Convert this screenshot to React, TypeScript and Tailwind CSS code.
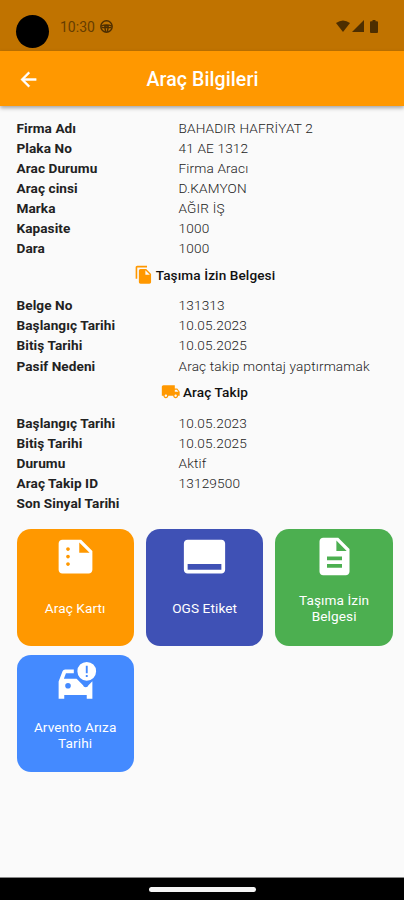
import React from "react";

type Pair = [string, string];

const vehicle: Pair[] = [
  ["Firma Adı", "BAHADIR HAFRİYAT 2"],
  ["Plaka No", "41 AE 1312"],
  ["Arac Durumu", "Firma Aracı"],
  ["Araç cinsi", "D.KAMYON"],
  ["Marka", "AĞIR İŞ"],
  ["Kapasite", "1000"],
  ["Dara", "1000"],
];
const permit: Pair[] = [
  ["Belge No", "131313"],
  ["Başlangıç Tarihi", "10.05.2023"],
  ["Bitiş Tarihi", "10.05.2025"],
  ["Pasif Nedeni", "Araç takip montaj yaptırmamak"],
];
const tracking: Pair[] = [
  ["Başlangıç Tarihi", "10.05.2023"],
  ["Bitiş Tarihi", "10.05.2025"],
  ["Durumu", "Aktif"],
  ["Araç Takip ID", "13129500"],
  ["Son Sinyal Tarihi", ""],
];

const icons = {
  copy: "M16 1H4c-1.1 0-2 .9-2 2v14h2V3h12V1zm-1 4l6 6v10c0 1.1-.9 2-2 2H7.99C6.89 23 6 22.1 6 21l.01-14c0-1.1.89-2 1.99-2h7zm-1 7h5.5L14 6.5V12z",
  truck: "M20 8h-3V4H3c-1.1 0-2 .9-2 2v11h2c0 1.66 1.34 3 3 3s3-1.34 3-3h6c0 1.66 1.34 3 3 3s3-1.34 3-3h2v-5l-3-4zM6 18.5c-.83 0-1.5-.67-1.5-1.5s.67-1.5 1.5-1.5 1.5.67 1.5 1.5-.67 1.5-1.5 1.5zm13.5-9l1.96 2.5H17V9.5h2.5zm-1.5 9c-.83 0-1.5-.67-1.5-1.5s.67-1.5 1.5-1.5 1.5.67 1.5 1.5-.67 1.5-1.5 1.5z",
  summary: "M15 3H5c-1.1 0-1.99.9-1.99 2L3 19c0 1.1.89 2 1.99 2H19c1.1 0 2-.9 2-2V9l-6-6zM8 17c-.55 0-1-.45-1-1s.45-1 1-1 1 .45 1 1-.45 1-1 1zm0-4c-.55 0-1-.45-1-1s.45-1 1-1 1 .45 1 1-.45 1-1 1zm0-4c-.55 0-1-.45-1-1s.45-1 1-1 1 .45 1 1-.45 1-1 1zm6 1V4.5l5.5 5.5H14z",
  label: "M21 3H3c-1.1 0-2 .9-2 2v14c0 1.1.9 2 2 2h18c1.1 0 2-.9 2-2V5c0-1.1-.9-2-2-2zm0 16H3v-3h18v3z",
  document: "M14 2H6c-1.1 0-1.99.9-1.99 2L4 20c0 1.1.89 2 1.99 2H18c1.1 0 2-.9 2-2V8l-6-6zm2 16H8v-2h8v2zm0-4H8v-2h8v2zm-3-5V3.5L18.5 9H13z",
  back: "M20 11H7.83l5.59-5.59L12 4l-8 8 8 8 1.41-1.41L7.83 13H20v-2z",
  crash: "M18 1a5 5 0 1 0 0 10a5 5 0 0 0 0-10zM17.5 3h1v4h-1zM17.5 8h1v1h-1zM11.1 5H6.5c-.66 0-1.21.42-1.42 1.01L3 11.5V20.6h3V18.6h12v2h3V11.3L18.9 13.4A1.5 1.5 0 0 1 16 13.4L12.6 10H5.8L6.9 7H11.1zM8 12.2a1.5 1.5 0 1 0 0 3a1.5 1.5 0 0 0 0-3z",
};

function Icon({ d, className }: { d: string; className: string }) {
  return (
    <svg viewBox="0 0 24 24" fill="currentColor" fillRule="evenodd" className={className}>
      <path d={d} />
    </svg>
  );
}

function Rows({ items }: { items: Pair[] }) {
  return (
    <dl>
      {items.map(([k, v]) => (
        <div key={k} className="flex h-[20.1px] items-center text-[13.6px] leading-[20px]">
          <dt className="w-[162px] font-bold tracking-[0.07px] text-[#222]">{k}</dt>
          <dd className="whitespace-nowrap font-light tracking-[0.17px] text-[#222]">{v}</dd>
        </div>
      ))}
    </dl>
  );
}

function Heading({ icon, children }: { icon: string; children: string }) {
  return (
    <h2 className="flex h-[37px] items-center justify-center gap-[2.5px] pb-[4px] pl-[5px] text-[13.6px] font-medium tracking-[0.1px] text-[#111]">
      <Icon d={icon} className="size-[19.5px] text-[#ff9800]" />
      {children}
    </h2>
  );
}

function Tile({ icon, label, color }: { icon: string; label: string; color: string }) {
  return (
    <button className={`flex h-[117.3px] flex-col items-center rounded-[14px] px-3 pt-[5px] text-white ${color}`}>
      <Icon d={icon} className="size-[45px] shrink-0" />
      <span className="flex h-[59px] items-center text-center text-[13.6px] leading-[16px] tracking-[0.1px]">{label}</span>
    </button>
  );
}

export default function App() {
  return (
    <div className="flex h-[900px] w-[404px] flex-col overflow-hidden bg-[#fafafa] font-[Roboto,sans-serif]">
      <div className="flex h-[51px] shrink-0 items-center bg-[#c07300] pl-[15.5px] pr-[26.5px] text-[#4d2e00]">
        <div className="mt-[12px] size-[33px] rounded-full bg-black" />
        <span className="ml-[11.5px] mt-[3px] text-[14px] text-[#663d00]">10:30</span>
        <svg viewBox="0 0 24 24" className="ml-[5px] mt-[1px] size-[13px]" fill="none" stroke="currentColor" strokeWidth="2.6">
          <circle cx="12" cy="12" r="10.5" />
          <path d="M2 11.5q10-5 20 0M3 14h6l1.5 8M21 14h-6l-1.5 8M9 11h6v3H9z" />
        </svg>
        <div className="ml-auto mt-[1px] flex items-center">
          <svg viewBox="0 0 14 12" className="h-[12px] w-[14px]" fill="currentColor"><path d="M0 3Q7-2 14 3L7 12Z" /></svg>
          <svg viewBox="0 0 12 12" className="ml-[2px] size-[12px]" fill="currentColor"><path d="M12 0v12H0Z" /></svg>
          <svg viewBox="0 0 8 13" className="ml-[6px] h-[13px] w-[8px]" fill="currentColor"><path d="M2.5 0h3v1.2H7q1 0 1 1V12q0 1-1 1H1q-1 0-1-1V2.2q0-1 1-1h1.5Z" /></svg>
        </div>
      </div>
      <header className="flex h-[55px] shrink-0 items-center bg-[#ff9800] px-[16.5px] pt-[2px] text-white shadow-[0_2px_4px_rgba(0,0,0,0.35)]">
        <svg viewBox="0 0 24 24" fill="currentColor" stroke="currentColor" strokeWidth="0.5" className="size-[23px]">
          <path d={icons.back} />
        </svg>
        <h1 className="flex-1 pr-[22px] text-center text-[19.5px] font-medium tracking-[0.1px]">Araç Bilgileri</h1>
      </header>
      <main className="flex-1 px-[16.5px] pt-[11.6px]">
        <Rows items={vehicle} />
        <Heading icon={icons.copy}>Taşıma İzin Belgesi</Heading>
        <Rows items={permit} />
        <Heading icon={icons.truck}>Araç Takip</Heading>
        <Rows items={tracking} />
        <div className="mt-[15.8px] grid grid-cols-[117.3px_117.3px_117.3px] gap-x-[12.2px] gap-y-[9px]">
          <Tile icon={icons.summary} label="Araç Kartı" color="bg-[#ff9800]" />
          <Tile icon={icons.label} label="OGS Etiket" color="bg-[#3f51b5]" />
          <Tile icon={icons.document} label="Taşıma İzin Belgesi" color="bg-[#4caf50]" />
          <Tile icon={icons.crash} label="Arvento Arıza Tarihi" color="bg-[#448aff]" />
        </div>
      </main>
      <footer className="flex h-[23px] shrink-0 items-center justify-center border-t border-[#888] bg-black">
        <div className="h-[5px] w-[107px] rounded-full bg-[#f5f5f5]" />
      </footer>
    </div>
  );
}
